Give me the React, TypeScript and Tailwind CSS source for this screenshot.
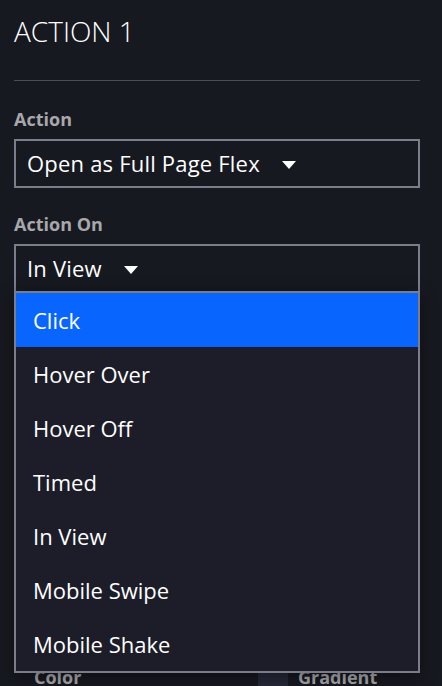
import React from 'react';

const font = { fontFamily: '"Open Sans", "Noto Sans", sans-serif' };

// small white caret used by the select boxes
const Caret: React.FC = () => (
  <svg width="14" height="8" viewBox="0 0 14 8" className="ml-[22px] mt-[2px]">
    <path d="M0 0 L14 0 L7 8 Z" fill="#ffffff" />
  </svg>
);

const SelectBox: React.FC<{ value: string; children?: React.ReactNode }> = ({ value, children }) => (
  <div className="relative">
    <div className="flex items-center h-[49px] border-2 border-[#7b7e8a] bg-[#171920] pl-[11px] text-[22px] tracking-[0.2px] text-white">
      <span>{value}</span>
      <Caret />
    </div>
    {children}
  </div>
);

const options = ['Click', 'Hover Over', 'Hover Off', 'Timed', 'In View', 'Mobile Swipe', 'Mobile Shake'];

export default function App() {
  return (
    <div className="w-[442px] h-[686px] overflow-hidden bg-[#171920]" style={font}>
      <div className="pl-[14px] pr-[22px]">
        <h1 className="pt-[13px] text-[28px] font-light leading-[36px] text-white">ACTION 1</h1>
        <div className="mt-[31px] h-px w-full bg-[#4a4e5a]" />

        <div className="mt-[26px] text-[18px] font-bold leading-[24px] text-[#a8a8ac]">Action</div>
        <div className="mt-[8px]">
          <SelectBox value="Open as Full Page Flex" />
        </div>

        <div className="mt-[24px] text-[18px] font-bold leading-[24px] text-[#a8a8ac]">Action On</div>
        <div className="mt-[8px]">
          <SelectBox value="In View">
            <ul className="absolute left-0 right-0 top-[47px] z-10 border-2 border-[#7b7e8a] bg-[#1c1d29] shadow-[0_4px_16px_rgba(0,0,0,0.4)]">
              {options.map((opt, i) => (
                <li
                  key={opt}
                  className={`flex h-[54px] items-center pl-[17px] text-[22px] text-white ${i === 0 ? 'bg-[#0866ff]' : ''}`}
                >
                  {opt}
                </li>
              ))}
            </ul>
          </SelectBox>
        </div>

        {/* the colour row, mostly covered by the open list */}
        <div className="mt-[372px] flex items-start pl-[20px]">
          <div className="w-[224px] text-[18px] font-bold leading-[24px] text-[#a8a8ac]">Color</div>
          <div className="-mt-[4px] h-[30px] w-[30px] bg-[#262838]" />
          <div className="ml-[10px] text-[18px] font-bold leading-[24px] text-[#a8a8ac]">Gradient</div>
        </div>
      </div>
    </div>
  );
}
